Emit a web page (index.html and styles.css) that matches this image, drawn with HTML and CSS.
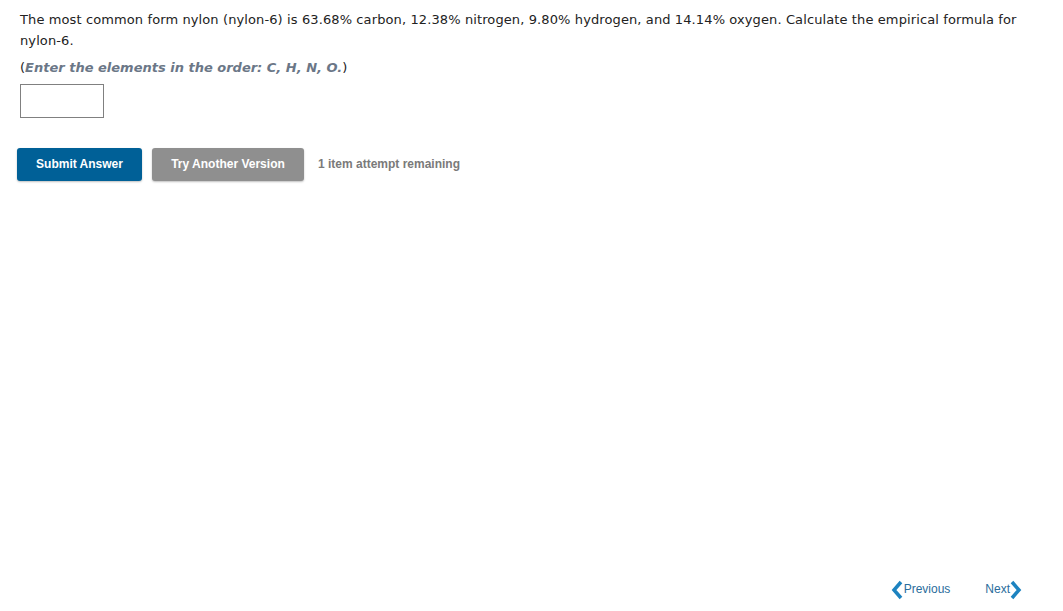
FILE: index.html
```html
<!DOCTYPE html>
<html lang="en">
  <head>
    <meta charset="UTF-8" />
    <title>Question</title>
    <link rel="stylesheet" href="styles.css">
  </head>
  <body>
    <main class="question">
      <p class="prompt">
        The most common form nylon (nylon-6) is 63.68% carbon, 12.38% nitrogen,
        9.80% hydrogen, and 14.14% oxygen. Calculate the empirical formula for
        nylon-6.
      </p>
      <p class="hint">(<em>Enter the elements in the order: C, H, N, O.</em>)</p>
      <input type="text" class="answer" aria-label="Answer" />

      <div class="actions">
        <button type="button" class="btn btn-primary">Submit Answer</button>
        <button type="button" class="btn btn-secondary">Try Another Version</button>
        <span class="attempts">1 item attempt remaining</span>
      </div>
    </main>

    <nav class="pager">
      <a href="#" class="pager-link">
        <svg class="chevron" width="13" height="20" viewBox="0 0 13 20">
          <polyline points="10,2 3,10 10,18" />
        </svg>Previous
      </a>
      <a href="#" class="pager-link">
        Next<svg class="chevron" width="12" height="20" viewBox="0 0 12 20">
          <polyline points="2,2 9,10 2,18" />
        </svg>
      </a>
    </nav>
  </body>
</html>
```

FILE: styles.css
```css
* {
  margin: 0;
  padding: 0;
  box-sizing: border-box;
}

body {
  width: 1063px;
  height: 611px;
  position: relative;
  font-family: "DejaVu Sans", Verdana, sans-serif;
  font-size: 13px;
  line-height: 21px;
  color: #222;
  background-color: #fff;
}

.question {
  padding: 9px 20px 0 20px;
}

.prompt {
  letter-spacing: 0.11px;
  margin-bottom: 6px;
}

.hint {
  color: #222;
  margin-bottom: 6px;
}

.hint em {
  font-style: italic;
  font-weight: bold;
  color: #6b7787;
}

.answer {
  display: block;
  width: 84px;
  height: 34px;
  border: 1px solid #808080;
  background-color: #fff;
}

.actions {
  display: flex;
  align-items: center;
  gap: 10px;
  margin: 30px 0 0 -3px;
}

.btn {
  height: 33px;
  border: none;
  border-radius: 3px;
  padding: 0 0 2px;
  white-space: nowrap;
  font-family: "Liberation Sans", Arial, sans-serif;
  font-size: 12px;
  font-weight: bold;
  color: #fff;
  cursor: pointer;
  box-shadow: 0 1px 2px rgba(0, 0, 0, 0.25);
}

.btn-primary {
  width: 125px;
  background-color: #006097;
}

.btn-secondary {
  width: 152px;
  background-color: #8f8f8f;
}

.attempts {
  margin-left: 4px;
  font-family: "Liberation Sans", Arial, sans-serif;
  font-size: 12px;
  font-weight: bold;
  color: #7a7a7a;
}

.pager {
  position: absolute;
  right: 41px;
  bottom: 11px;
  display: flex;
  gap: 35px;
}

.pager-link {
  display: flex;
  align-items: center;
  font-family: "Liberation Sans", Arial, sans-serif;
  font-size: 12px;
  color: #2a6d9c;
  text-decoration: none;
}

.chevron polyline {
  fill: none;
  stroke: #1d83c0;
  stroke-width: 3.5;
}
```
